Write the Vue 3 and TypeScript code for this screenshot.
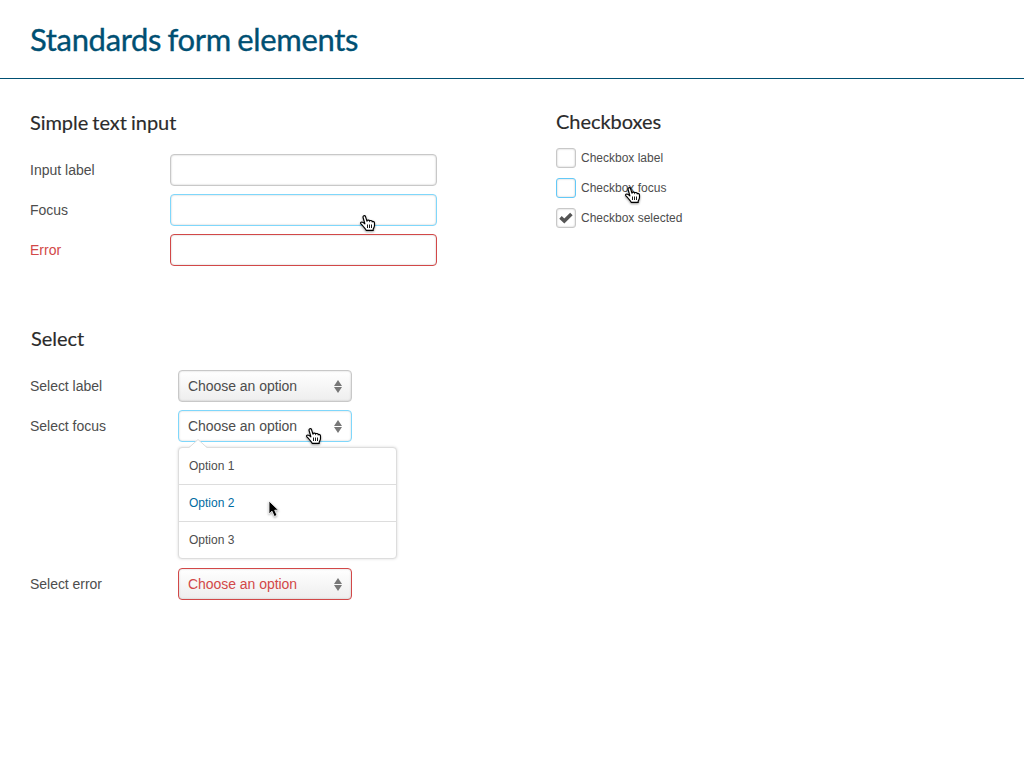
<script setup lang="ts">
import { defineComponent, h } from 'vue'

interface Field { label: string; state: string; pointer?: boolean }

const inputs: Field[] = [
  { label: 'Input label', state: 'normal' },
  { label: 'Focus', state: 'focus', pointer: true },
  { label: 'Error', state: 'error' },
]
const checks: Field[] = [
  { label: 'Checkbox label', state: 'normal' },
  { label: 'Checkbox focus', state: 'focus', pointer: true },
  { label: 'Checkbox selected', state: 'selected' },
]
const selects: Field[] = [
  { label: 'Select label', state: 'normal' },
  { label: 'Select focus', state: 'focus', pointer: true },
  { label: 'Select error', state: 'error' },
]
const options: string[] = ['Option 1', 'Option 2', 'Option 3']

const HandPointer = defineComponent(() => () =>
  h('svg', { width: 18, height: 20, viewBox: '0 0 18 20' }, [
    h('path', {
      d: 'M5.8 10.4 4.2 5C3.4 2.5 5.9 2 6.6 3.8L7.8 7.6C8.6 6.8 10.2 6.9 10.6 7.8 11.5 7.2 12.8 7.5 13.2 8.5 14.6 8.1 15.5 8.9 15.5 10.3V12.6C15.5 14.2 14.5 15.2 14.2 16.2V17.4H7.2C6.8 15.8 4.8 14.4 3.7 12.7L1.9 10.9C1 9.5 2.6 8.5 4 9.4L5.8 10.8Z',
      fill: '#fff', stroke: '#000', 'stroke-width': 1.15, 'stroke-linejoin': 'round',
    }),
    h('path', { d: 'M8.5 11.5V15M10.5 11.5V15M12.5 11.5V15', fill: 'none', stroke: '#000', 'stroke-width': 0.9 }),
    h('path', { d: 'M7.8 7.6 8.2 9M10.6 7.8V9.2M13.2 8.5V9.6', fill: 'none', stroke: '#000', 'stroke-width': 0.7 }),
  ]),
)
</script>

<template>
  <main class="page">
    <header class="top"><h1>Standards form elements</h1></header>
    <div class="columns">
      <div class="left">
        <section>
          <h2>Simple text input</h2>
          <div v-for="f in inputs" :key="f.label" class="row" :class="f.state">
            <label>{{ f.label }}</label>
            <div class="input"><HandPointer v-if="f.pointer" class="hand" /></div>
          </div>
        </section>
        <section class="selects">
          <h2>Select</h2>
          <template v-for="f in selects" :key="f.label">
            <div class="row" :class="f.state">
              <label>{{ f.label }}</label>
              <div class="select">
                <span>Choose an option</span>
                <svg class="arrows" width="8" height="13" viewBox="0 0 8 13"><path d="M4 0 8 6H0ZM0 7H8L4 13Z" fill="#777" /></svg>
                <HandPointer v-if="f.pointer" class="hand" />
              </div>
            </div>
            <div v-if="f.state === 'focus'" class="menu">
              <svg class="tip" width="18" height="9" viewBox="0 0 18 9"><path d="M0 9 9 0.5 18 9Z" fill="#fff" /><path d="M0 8 1 7.7 9 .5 17 7.7 18 8" fill="none" stroke="#ddd" /></svg>
              <div v-for="o in options" :key="o" class="option" :class="{ active: o === 'Option 2' }">{{ o }}</div>
              <svg class="arrow" width="14" height="20" viewBox="0 0 14 20"><path d="M2 1V14L5 11.2 7.3 16.5 10 15.3 7.7 10.2H11.5Z" fill="#000" stroke="#fff" stroke-width="0.8" /></svg>
            </div>
          </template>
        </section>
      </div>
      <section class="right">
        <h2>Checkboxes</h2>
        <div v-for="f in checks" :key="f.label" class="check" :class="f.state">
          <span class="box"><svg v-if="f.state === 'selected'" width="14" height="12" viewBox="0 0 14 12"><path d="M1.5 5.4 5.3 9 12.4 2" fill="none" stroke="#555" stroke-width="3.6" /></svg></span>
          <label>{{ f.label }}</label>
          <HandPointer v-if="f.pointer" class="hand" />
        </div>
      </section>
    </div>
  </main>
</template>

<style>
body { margin: 0; background: #fff; }
</style>
<style scoped>
* { box-sizing: border-box; }
.page { height: 768px; overflow: hidden; font-family: "Liberation Sans", Arial, sans-serif; font-size: 14px; color: #4d4d4d; }
.top { height: 79px; padding: 20px 30px 0; border-bottom: 1px solid #005073; }
h1, h2 { margin: 0; font-family: Lato, sans-serif; font-weight: 400; }
h1 { font-size: 31px; line-height: 38px; letter-spacing: -0.33px; word-spacing: -1.3px; color: #005073; -webkit-text-stroke: 0.35px #005073; }
h2 { font-size: 20px; line-height: 24px; letter-spacing: -0.05px; word-spacing: -0.9px; color: #2b2b2b; -webkit-text-stroke: 0.15px #2b2b2b; }
.columns { display: grid; grid-template-columns: 526px 1fr; padding: 31px 0 0 30px; }
.left h2 { margin-bottom: 20px; }
.row { display: flex; align-items: center; height: 32px; margin-bottom: 8px; }
.row label { width: 140px; line-height: 16px; }
.selects { margin-top: 60px; }
.selects .row label { width: 148px; letter-spacing: -0.03px; }
.selects h2 { padding-left: 1px; }
.input { position: relative; width: 267px; height: 32px; border: 1px solid #c8c8c8; border-radius: 4px; box-shadow: inset 0 0 2px rgba(0,0,0,.26); }
.select { position: relative; display: flex; justify-content: space-between; align-items: center; width: 174px; height: 32px; padding: 0 9px; border: 1px solid #c8c8c8; border-radius: 4px; background: linear-gradient(#fff, #eee); box-shadow: inset 0 0 2px rgba(0,0,0,.22); letter-spacing: -0.04px; }
.focus .input, .focus .select { border-color: #7fd7fb; background: #fff; }
.error { color: #d24848; }
.error .input, .error .select { border-color: #d24848; }
.selects .error label { color: #4d4d4d; }
.hand { position: absolute; filter: drop-shadow(0 1px 1px rgba(0,0,0,.4)); }
.input .hand { left: 188px; top: 18px; }
.select .hand { left: 126px; top: 15px; }
.menu { position: relative; width: 219px; height: 112px; margin: -3px 0 9px 148px; border: 1px solid #ddd; border-radius: 4px; box-shadow: 0 0 3px rgba(0,0,0,.15); background: #fff; font-size: 12px; }
.option { height: 37px; padding-left: 10px; line-height: 36px; border-bottom: 1px solid #ddd; }
.option:nth-of-type(3) { border: 0; }
.active { color: #006ca2; }
.tip { position: absolute; left: 10px; top: -9px; }
.arrow { position: absolute; left: 88px; top: 52px; filter: drop-shadow(0 1px 1px rgba(0,0,0,.35)); }
.right h2 { margin: -1px 0 15px; }
.check { position: relative; display: flex; align-items: center; height: 20px; margin-bottom: 10px; font-size: 12px; }
.box { display: flex; align-items: center; justify-content: center; width: 20px; height: 20px; margin-right: 5px; border: 1px solid #c8c8c8; border-radius: 3px; box-shadow: inset 0 0 2px rgba(0,0,0,.26); }
.focus .box { border-color: #63c9f7; }
.check .hand { left: 68px; top: 7px; }
</style>
